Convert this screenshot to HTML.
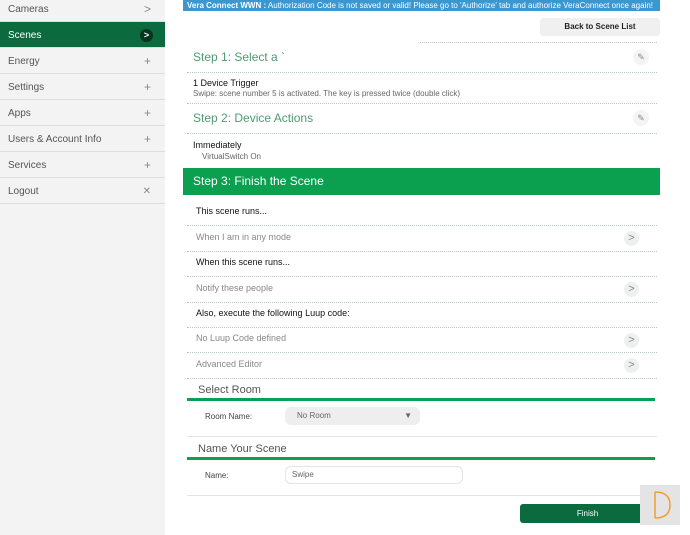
<!DOCTYPE html>
<html><head><style>
*{margin:0;padding:0;box-sizing:border-box}
body{width:690px;height:535px;background:#fff;font-family:"Liberation Sans",sans-serif;position:relative;overflow:hidden;font-size:9px;color:#222}
.side{position:absolute;left:0;top:0;width:165px;height:535px;background:#f3f3f3}
.si{position:absolute;left:0;width:165px;height:26px;border-bottom:1px solid #ddd;color:#555;font-size:10px;padding:0 8px;line-height:27px}
.si span{position:absolute;right:14px;top:0;color:#888;font-size:12px}
.a{position:absolute}
.dot{position:absolute;left:187px;width:470px;border-top:1px dotted #b8c4cc}
.h{position:absolute;left:193px;font-size:12px;color:#4f9a73}
.t{position:absolute;left:196px;font-size:9px;color:#111}
.g{position:absolute;left:196px;font-size:9px;color:#888}
.arr{position:absolute;left:624px;width:15px;height:15px;border-radius:50%;background:#eef0f0;color:#888;font-size:11px;text-align:center;line-height:14px}
.pen{position:absolute;left:633px;width:16px;height:16px;border-radius:50%;background:#f4f4f4;color:#888;font-size:9px;text-align:center;line-height:16px}
.gl{position:absolute;left:187px;width:468px;height:3px;background:#0aa050}
.sl{position:absolute;left:187px;width:470px;border-top:1px solid #e4e4e4}
</style></head><body>
<div class="side">
<div class="si" style="top:-4px">Cameras<span>&gt;</span></div>
<div class="si" style="top:22px;background:#0b6a3e;color:#fff">Scenes<span style="top:7px;width:13px;height:13px;border-radius:50%;background:#06341e;color:#fff;font-size:9px;line-height:13px;text-align:center;font-weight:bold;right:12px">&gt;</span></div>
<div class="si" style="top:48px">Energy<span>+</span></div>
<div class="si" style="top:74px">Settings<span>+</span></div>
<div class="si" style="top:100px">Apps<span>+</span></div>
<div class="si" style="top:126px">Users &amp; Account Info<span>+</span></div>
<div class="si" style="top:152px">Services<span>+</span></div>
<div class="si" style="top:178px">Logout<span style="font-size:10px">✕</span></div>
</div>
<div class="a" style="left:183px;top:0;width:477px;height:11px;background:#3a97d0;color:#fff;font-size:8px;line-height:11px;padding-left:4px;white-space:nowrap;overflow:hidden"><b>Vera Connect WWN :</b> Authorization Code is not saved or valid! Please go to 'Authorize' tab and authorize VeraConnect once again!</div>
<div class="a" style="left:540px;top:18px;width:120px;height:18px;background:#f0f0f0;border-radius:3px;font-size:8px;font-weight:bold;text-align:center;line-height:18px">Back to Scene List</div>
<div class="dot" style="top:42px;left:420px;width:237px"></div>
<div class="h" style="top:50px">Step 1: Select a `</div>
<div class="pen" style="top:49px">✎</div>
<div class="dot" style="top:72px"></div>
<div class="t" style="left:193px;top:78px">1 Device Trigger</div>
<div class="g" style="left:193px;top:89px;color:#666;font-size:8px">Swipe: scene number 5 is activated. The key is pressed twice (double click)</div>
<div class="dot" style="top:103px"></div>
<div class="h" style="top:111px">Step 2: Device Actions</div>
<div class="pen" style="top:110px">✎</div>
<div class="dot" style="top:133px"></div>
<div class="t" style="left:193px;top:140px">Immediately</div>
<div class="g" style="left:202px;top:152px;color:#666;font-size:8px">VirtualSwitch On</div>
<div class="a" style="left:183px;top:168px;width:477px;height:27px;background:#0aa050;color:#fff;font-size:12px;line-height:27px;padding-left:10px">Step 3: Finish the Scene</div>
<div class="t" style="top:206px">This scene runs...</div>
<div class="dot" style="top:225px"></div>
<div class="g" style="top:232px">When I am in any mode</div><div class="arr" style="top:231px">&gt;</div>
<div class="dot" style="top:251px"></div>
<div class="t" style="top:257px">When this scene runs...</div>
<div class="dot" style="top:276px"></div>
<div class="g" style="top:283px">Notify these people</div><div class="arr" style="top:282px">&gt;</div>
<div class="dot" style="top:302px"></div>
<div class="t" style="top:308px">Also, execute the following Luup code:</div>
<div class="dot" style="top:327px"></div>
<div class="g" style="top:333px">No Luup Code defined</div><div class="arr" style="top:333px">&gt;</div>
<div class="dot" style="top:352px"></div>
<div class="g" style="top:359px">Advanced Editor</div><div class="arr" style="top:358px">&gt;</div>
<div class="dot" style="top:378px"></div>
<div class="h" style="left:198px;top:384px;font-size:11px;color:#555">Select Room</div>
<div class="gl" style="top:398px"></div>
<div class="g" style="left:205px;top:412px;color:#444;font-size:8px">Room Name:</div>
<div class="a" style="left:285px;top:407px;width:135px;height:18px;background:#eee;border-radius:6px;color:#666;font-size:8px;line-height:18px;padding-left:12px">No Room<span style="position:absolute;right:8px;font-size:8px">▼</span></div>
<div class="sl" style="top:436px"></div>
<div class="h" style="left:198px;top:443px;font-size:11px;color:#555">Name Your Scene</div>
<div class="gl" style="top:457px"></div>
<div class="g" style="left:205px;top:471px;color:#444;font-size:8px">Name:</div>
<div class="a" style="left:285px;top:466px;width:178px;height:18px;border:1px solid #e4e4e4;border-radius:6px;color:#666;font-size:8px;line-height:16px;padding-left:6px">Swipe</div>
<div class="sl" style="top:495px"></div>
<div class="a" style="left:520px;top:504px;width:135px;height:19px;background:#0b6a3e;border-radius:3px;color:#fff;font-size:8px;text-align:center;line-height:19px">Finish</div>
<div class="a" style="left:640px;top:485px;width:40px;height:40px;background:#e4e4e4"></div>
<svg class="a" style="left:640px;top:485px" width="40" height="40"><path d="M15 7 V33 M15 7 Q30 7 30 20 Q30 33 15 33" fill="none" stroke="#f0a030" stroke-width="1.5"/></svg>
</body></html>
